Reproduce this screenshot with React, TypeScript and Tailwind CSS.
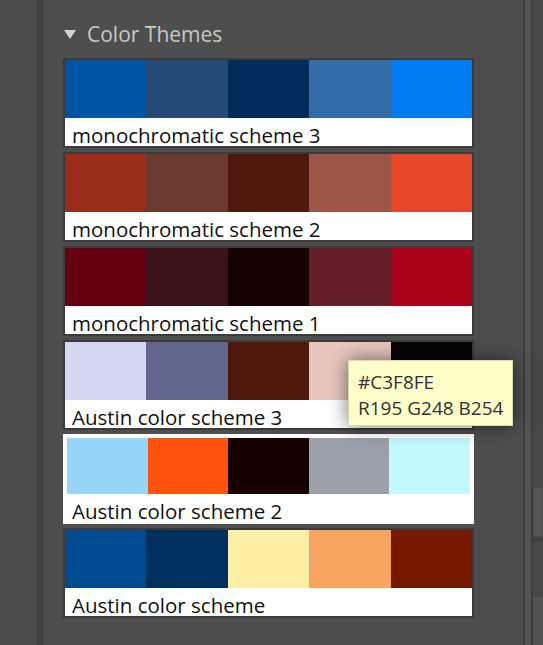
const themes = [
  { name: "monochromatic scheme 3", colors: ["#0054a6", "#244a75", "#002b5a", "#336ca8", "#007bf2"] },
  { name: "monochromatic scheme 2", colors: ["#9b2e1a", "#6b3a30", "#4e180d", "#9c5546", "#e64726"] },
  { name: "monochromatic scheme 1", colors: ["#650010", "#3a1217", "#170202", "#631e28", "#a90117"] },
  { name: "Austin color scheme 3", colors: ["#d5d7f1", "#62668c", "#4e180d", "#e8c6bd", "#050505"] },
  { name: "Austin color scheme 2", colors: ["#96d5f7", "#ff530d", "#160000", "#9ca0a8", "#c3f8fe"], selected: true },
  { name: "Austin color scheme", colors: ["#004a8f", "#00305e", "#fdefa5", "#f5a462", "#761900"] },
]

function ThemeCard({ name, colors, selected }: { name: string; colors: string[]; selected?: boolean }) {
  return (
    <div
      className={
        selected
          ? "w-[411px] h-[90px] border-2 border-white bg-white pt-[2px] px-[2px] flex flex-col"
          : "w-[411px] h-[90px] border-2 border-[#3b3b3b] bg-white flex flex-col"
      }
    >
      <div className={selected ? "flex h-[56px]" : "flex h-[58px]"}>
        {colors.map((c, i) => (
          <div key={i} className="flex-1" style={{ backgroundColor: c }} />
        ))}
      </div>
      <div
        className={
          selected
            ? "h-[28px] pl-[5px] pt-[4px] text-[20.5px] leading-[26px] text-[#111] whitespace-nowrap"
            : "h-[28px] pl-[7px] pt-[4px] text-[20.5px] leading-[26px] text-[#111] whitespace-nowrap"
        }
      >
        {name}
      </div>
    </div>
  )
}

export default function App() {
  return (
    <div
      className="w-[543px] h-[645px] bg-[#4d4d4d] flex overflow-hidden"
      style={{ fontFamily: '"Open Sans", "Noto Sans", sans-serif' }}
    >
      {/* left gutter */}
      <div className="w-[37px] shrink-0 bg-[#4b4b4b]" />
      <div className="w-[2px] shrink-0 bg-[#3c3c3c]" />
      <div className="w-[2px] shrink-0 bg-[#454545]" />
      <div className="w-[2px] shrink-0 bg-[#3c3c3c]" />

      {/* main panel */}
      <div className="relative flex-1 bg-[#4e4e4e] pl-[20px] pt-[19px]">
        <div className="flex items-center h-[30px] text-[#c9c9c9] text-[21px] leading-[30px]">
          <svg width="12" height="9" viewBox="0 0 12 9" className="ml-[1px] mr-[11px]">
            <polygon points="0,0 12,0 6,9" fill="#d2d2d2" />
          </svg>
          <span>Color Themes</span>
        </div>

        <div className="mt-[9px] flex flex-col gap-[4px]">
          {themes.map((t) => (
            <ThemeCard key={t.name} name={t.name} colors={t.colors} selected={t.selected} />
          ))}
        </div>

        {/* tooltip */}
        <div className="absolute left-[305px] top-[360px] w-[165px] h-[66px] bg-[#fefec9] border border-[#d8d8b0] shadow-[0_0_18px_rgba(0,0,0,0.55)] pl-[9px] pt-[8px] text-[19px] leading-[26px] text-[#333] whitespace-nowrap">
          <div>#C3F8FE</div>
          <div>R195 G248 B254</div>
        </div>
      </div>

      {/* right separators + scrollbar */}
      <div className="w-[2px] shrink-0 bg-[#3d3d3d]" />
      <div className="w-[6px] shrink-0 bg-[#545454]" />
      <div className="w-[2px] shrink-0 bg-[#3d3d3d]" />
      <div className="w-[10px] shrink-0 bg-[#474747] flex flex-col">
        <div className="h-[487px]" />
        <div className="h-[50px] bg-[#575757] border border-[#4a4a4a]" />
        <div className="h-[4px] bg-[#3f3f3f]" />
        <div className="h-[56px]" />
        <div className="flex-1 bg-[#525252]" />
      </div>
    </div>
  )
}
